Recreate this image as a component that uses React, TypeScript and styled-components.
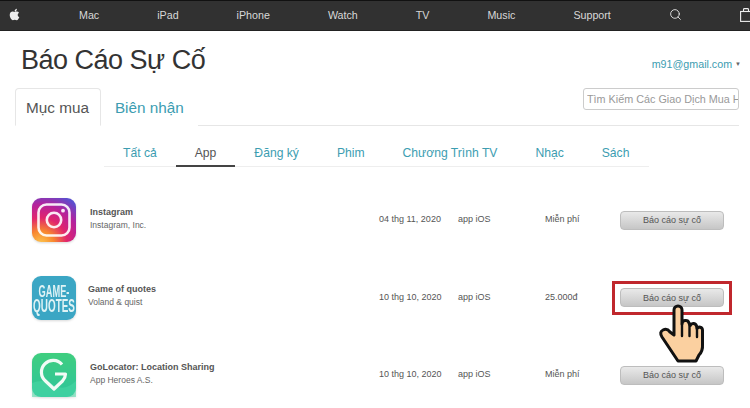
import styled, { createGlobalStyle } from "styled-components";
import { FaApple } from "react-icons/fa";
import { Search } from "lucide-react";

const GlobalStyle = createGlobalStyle`
    html, body {
        margin: 0;
        background: #fff;
        font-family: "Liberation Sans", Arial, sans-serif;
    }
`;

const Page = styled.div`
    width: 750px;
    height: 408px;
    overflow: hidden;
    background: #fff;
`;

const TopBar = styled.nav`
    height: 31px;
    box-sizing: border-box;
    display: flex;
    align-items: center;
    gap: 58px;
    padding: 0 0 2px 8px;
    background: #313131;
    border-top: 1px solid #111;
    border-bottom: 1px solid #222;
    overflow: hidden;
    color: #d8d8d8;
    font-size: 10.7px;
    white-space: nowrap;
`;

const NavIcon = styled.span`
    display: flex;
    flex: none;
    color: #eee;
`;

const TitleRow = styled.header`
    height: 57px;
    display: flex;
    justify-content: space-between;
    padding: 0 9px 0 21px;
`;

const Title = styled.h1`
    margin: 13px 0 0;
    font-size: 27px;
    line-height: 32px;
    font-weight: 400;
    color: #333;
    letter-spacing: -0.5px;
`;

const Account = styled.div`
    margin: 26px 0 0;
    font-size: 10.7px;
    line-height: 14px;
    color: #3c9db1;
    span {
        color: #666;
        font-size: 6px;
        margin-left: 3px;
        vertical-align: 2px;
    }
`;

const TabBar = styled.div`
    margin: 0 11px 0 15px;
    height: 38px;
    box-sizing: border-box;
    display: flex;
    align-items: flex-start;
    border-bottom: 1px solid #e6e6e6;
`;

const Tab = styled.div<{ $active?: boolean }>`
    height: 38px;
    box-sizing: border-box;
    padding: ${(props) => (props.$active ? "0 11px 0 10px" : "0 13px")};
    line-height: 37px;
    font-size: 15.3px;
    color: ${(props) => (props.$active ? "#555" : "#3c9db1")};
    background: #fff;
    border: 1px solid ${(props) => (props.$active ? "#e6e6e6" : "transparent")};
    border-bottom-color: ${(props) => (props.$active ? "#fff" : "transparent")};
    border-radius: 4px 4px 0 0;
`;

const SearchBox = styled.input`
    margin-left: auto;
    width: 156px;
    height: 22px;
    box-sizing: border-box;
    padding: 0 0 0 3px;
    border: 1px solid #ccc;
    border-radius: 3px;
    font-family: inherit;
    font-size: 10.8px;
    &::placeholder {
        color: #999;
        opacity: 1;
    }
`;

const FilterBar = styled.div`
    margin: 14px 0 0 104px;
    width: 545px;
    height: 27px;
    display: flex;
    box-sizing: border-box;
    border-bottom: 1px solid #eee;
`;

const Filter = styled.div<{ $active?: boolean }>`
    height: 27px;
    box-sizing: border-box;
    padding: 0 19px;
    line-height: 26px;
    font-size: 12.15px;
    white-space: nowrap;
    color: ${(props) => (props.$active ? "#555" : "#3c9db1")};
    border-bottom: ${(props) => (props.$active ? "2px solid #444" : "0")};
`;

const Rows = styled.div`
    margin-top: 31px;
    padding-left: 32px;
    display: flex;
    flex-direction: column;
    gap: 33.5px;
`;

const Row = styled.div`
    height: 44px;
    display: grid;
    grid-template-columns: 44px 303px 79px 87px 75px 104px;
    align-items: center;
    color: #555;
    font-size: 9px;
`;

const AppIcon = styled.svg`
    display: block;
    width: 44px;
    height: 44px;
    filter: drop-shadow(0 1px 1px rgba(0, 0, 0, 0.15));
`;

const Info = styled.div<{ $shift: number; $lift?: number }>`
    padding-left: ${(props) => props.$shift}px;
    margin-top: ${(props) => -3 - (props.$lift ?? 0)}px;
`;

const AppName = styled.div`
    font-weight: 700;
    font-size: 9px;
    line-height: 13px;
    color: #555;
    white-space: nowrap;
`;

const Publisher = styled.div`
    font-size: 8.5px;
    line-height: 12px;
    color: #666;
`;

const Cell = styled.div`
    margin-top: -2px;
    white-space: nowrap;
`;

const ReportCell = styled.div`
    position: relative;
`;

const ReportButton = styled.button`
    display: block;
    width: 104px;
    height: 19px;
    padding: 0;
    border: 1px solid #bdbdbd;
    border-radius: 4px;
    background: linear-gradient(#e9e9e9, #c6c6c6);
    font-family: inherit;
    font-size: 9px;
    color: #555;
`;

const Highlight = styled.div`
    position: absolute;
    left: -8px;
    top: -7px;
    width: 120px;
    height: 34px;
    box-sizing: border-box;
    border: 3px solid #c0272d;
`;

const Hand = styled.svg`
    position: absolute;
    left: 35px;
    top: 13px;
    width: 52px;
    height: 65px;
`;

function InstagramIcon() {
    return (
        <AppIcon viewBox="0 0 44 44">
            <defs>
                <radialGradient id="ig" cx="0.2" cy="1.05" r="1.2">
                    <stop offset="0" stopColor="#fdc84e" />
                    <stop offset="0.25" stopColor="#f8882f" />
                    <stop offset="0.5" stopColor="#e1256c" />
                    <stop offset="0.75" stopColor="#b5219c" />
                    <stop offset="1" stopColor="#5a4fcf" />
                </radialGradient>
            </defs>
            <rect width="44" height="44" rx="9" fill="url(#ig)" />
            <rect x="6.5" y="6.5" width="31" height="31" rx="8" fill="none" stroke="#fff" strokeOpacity="0.9" strokeWidth="2.6" />
            <circle cx="22" cy="22" r="7.2" fill="none" stroke="#fff" strokeOpacity="0.9" strokeWidth="2.6" />
            <circle cx="31" cy="12.7" r="1.9" fill="#fff" fillOpacity="0.9" />
        </AppIcon>
    );
}

function QuotesIcon() {
    return (
        <AppIcon viewBox="0 0 44 44">
            <rect width="44" height="44" rx="9" fill="#3ba6c4" />
            <text transform="translate(22 21) scale(0.84 1.55)" textAnchor="middle" fontFamily="Liberation Sans" fontWeight="700" fontSize="11" fill="#dff3f5">
                GAME-
            </text>
            <text transform="translate(22 35.5) scale(0.9 1.6)" textAnchor="middle" fontFamily="Liberation Sans" fontWeight="700" fontSize="11" fill="#dff3f5">
                QUOTES
            </text>
        </AppIcon>
    );
}

function LocatorIcon() {
    return (
        <AppIcon viewBox="0 0 44 44">
            <defs>
                <linearGradient id="geo" x1="0" y1="0" x2="0" y2="1">
                    <stop offset="0" stopColor="#3fce7f" />
                    <stop offset="1" stopColor="#2fc49c" />
                </linearGradient>
            </defs>
            <rect width="44" height="44" rx="9" fill="url(#geo)" />
            <path d="M0 30 Q12 25 22 32 T44 28 V44 H0 Z" fill="#4ad8a6" fillOpacity="0.55" />
            <path
                d="M30 11.5 A11.7 11.7 0 1 0 13.5 28 L22 36 L30.5 28 Q33.5 24.5 33.5 21 H23"
                fill="none"
                stroke="#f2fbf6"
                strokeWidth="3.2"
                strokeLinejoin="round"
            />
        </AppIcon>
    );
}

function PointerHand() {
    return (
        <Hand viewBox="655 302 52 65">
            <path
                d="M674 336 V311 a4 4 0 0 1 8 0 V325 a3.6 3.6 0 0 1 7 -1 l1.2 2.5 a3.4 3.4 0 0 1 6.3 0.5 l0.5 2.5 a3 3 0 0 1 5.5 1.5 V345 Q703 352 699 356 L696 362 H678 L672 353 L662 338 Q659 333 663 331 Q667 329 670 333 Z"
                fill="#fbd0a0"
                stroke="#111"
                strokeWidth="3"
                strokeLinejoin="round"
            />
            <path d="M682 325 V337 M689.5 326 V337 M697 329.5 V338" fill="none" stroke="#111" strokeWidth="2.4" strokeLinecap="round" />
        </Hand>
    );
}

const navItems = ["Mac", "iPad", "iPhone", "Watch", "TV", "Music", "Support"];
const filters = ["Tất cả", "App", "Đăng ký", "Phim", "Chương Trình TV", "Nhạc", "Sách"];

function App() {
    return (
        <Page>
            <GlobalStyle />
            <TopBar>
                <NavIcon>
                    <FaApple size={13} />
                </NavIcon>
                {navItems.map((item) => (
                    <span key={item}>{item}</span>
                ))}
                <NavIcon>
                    <Search size={13} strokeWidth={1.6} />
                </NavIcon>
                <NavIcon>
                    <svg width="12" height="14" viewBox="0 0 12 14" fill="none" stroke="currentColor" strokeWidth="1.1">
                        <rect x="0.6" y="3.5" width="10.8" height="9.9" />
                        <path d="M3.5 3.5 V1.5 Q3.5 0.6 4.5 0.6 H7.5 Q8.5 0.6 8.5 1.5 V3.5" />
                    </svg>
                </NavIcon>
            </TopBar>
            <TitleRow>
                <Title>Báo Cáo Sự Cố</Title>
                <Account>
                    m91@gmail.com<span>▼</span>
                </Account>
            </TitleRow>
            <TabBar>
                <Tab $active>Mục mua</Tab>
                <Tab>Biên nhận</Tab>
                <SearchBox placeholder="Tìm Kiếm Các Giao Dịch Mua Hàng" />
            </TabBar>
            <FilterBar>
                {filters.map((item) => (
                    <Filter key={item} $active={item === "App"}>
                        {item}
                    </Filter>
                ))}
            </FilterBar>
            <Rows>
                <Row>
                    <InstagramIcon />
                    <Info $shift={14}>
                        <AppName>Instagram</AppName>
                        <Publisher>Instagram, Inc.</Publisher>
                    </Info>
                    <Cell>04 thg 11, 2020</Cell>
                    <Cell>app iOS</Cell>
                    <Cell>Miễn phí</Cell>
                    <ReportCell>
                        <ReportButton>Báo cáo sự cố</ReportButton>
                    </ReportCell>
                </Row>
                <Row>
                    <QuotesIcon />
                    <Info $shift={12} $lift={1}>
                        <AppName>Game of quotes</AppName>
                        <Publisher>Voland &amp; quist</Publisher>
                    </Info>
                    <Cell>10 thg 10, 2020</Cell>
                    <Cell>app iOS</Cell>
                    <Cell>25.000đ</Cell>
                    <ReportCell>
                        <ReportButton>Báo cáo sự cố</ReportButton>
                        <Highlight />
                        <PointerHand />
                    </ReportCell>
                </Row>
                <Row>
                    <LocatorIcon />
                    <Info $shift={14}>
                        <AppName>GoLocator: Location Sharing</AppName>
                        <Publisher>App Heroes A.S.</Publisher>
                    </Info>
                    <Cell>10 thg 10, 2020</Cell>
                    <Cell>app iOS</Cell>
                    <Cell>Miễn phí</Cell>
                    <ReportCell>
                        <ReportButton>Báo cáo sự cố</ReportButton>
                    </ReportCell>
                </Row>
            </Rows>
        </Page>
    );
}

export default App;
